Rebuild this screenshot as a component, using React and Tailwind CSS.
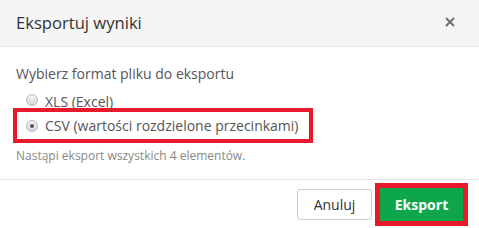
export default function App() {
  return (
    <div className="w-[479px] h-[228px] bg-white font-['Open_Sans',sans-serif] text-[#333] overflow-hidden flex flex-col">
      <div className="h-[47px] shrink-0 bg-[#f5f5f5] border-b border-[#e5e5e5] flex items-center justify-between pl-4 pr-[24px]">
        <h1 className="text-[16.6px] leading-[22px] text-[#333] -mt-[1px]">Eksportuj wyniki</h1>
        <svg width="10" height="10" viewBox="0 0 10 10" className="-mt-[2px]">
          <path d="M1 1L9 9M9 1L1 9" stroke="#6f6f6f" strokeWidth="2" />
        </svg>
      </div>

      <div className="flex-1 px-4 pt-[17px]">
        <p className="text-[14px] leading-[20px] text-[#555]">Wybierz format pliku do eksportu</p>
        <label className="mt-[7px] flex items-center h-[17px] pl-[10px] gap-[7px] text-[14px] text-[#555]">
          <span className="w-[12px] h-[12px] rounded-full border border-[#b5b5b5] bg-gradient-to-b from-[#f3f3f3] to-[#d8d8d8]" />
          <span className="leading-[17px] mt-[3px]">XLS (Excel)</span>
        </label>
        <div className="-ml-[3px] w-[300px] h-[35px] border-4 border-[#e8192b] flex items-center pl-[9px] gap-[7px] text-[14px] text-[#555]">
          <span className="w-[12px] h-[12px] rounded-full border border-[#b5b5b5] bg-gradient-to-b from-[#f3f3f3] to-[#d8d8d8] flex items-center justify-center">
            <span className="w-[4px] h-[4px] rounded-full bg-[#555]" />
          </span>
          <span className="leading-[20px]">CSV (wartości rozdzielone przecinkami)</span>
        </div>
        <p className="mt-[4px] text-[12px] leading-[17px] text-[#888]">Nastąpi eksport wszystkich 4 elementów.</p>
      </div>

      <div className="h-[49px] shrink-0 border-t border-[#e5e5e5] flex items-center justify-end pr-[11px] gap-[3px]">
        <button className="w-[75px] h-[31px] rounded-[3px] border border-[#ccc] bg-white text-[14px] text-[#333]">Anuluj</button>
        <div className="border-[5px] border-[#e8192b] mt-[1px]">
          <button className="w-[83px] h-[33px] bg-[#0da64a] text-white text-[14px] font-bold">Eksport</button>
        </div>
      </div>
    </div>
  );
}
